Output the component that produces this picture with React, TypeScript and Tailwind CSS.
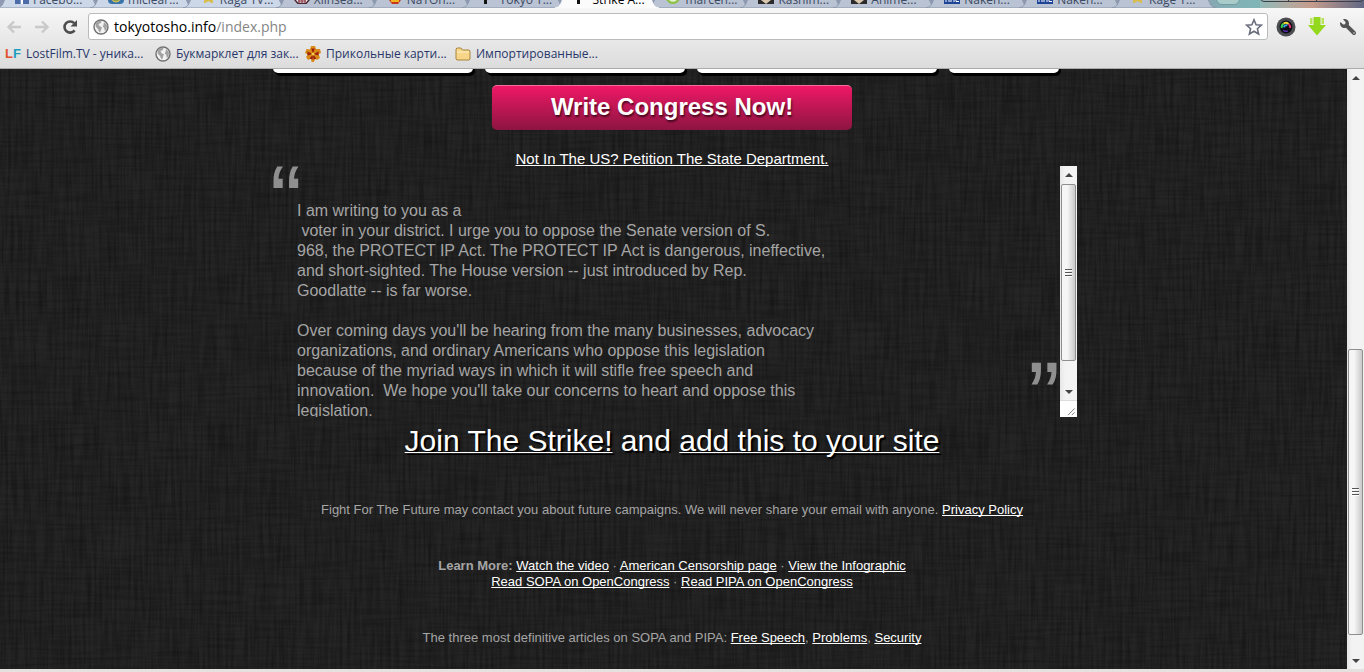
import type { ReactNode } from "react";
import { FaFacebookF, FaStar, FaWrench } from "react-icons/fa";

type TabIcon = "facebook" | "earth" | "star" | "face" | "fire" | "mark" | "green" | "avatar" | "mal";

const tabs: { id: number; title: string; icon: TabIcon; active?: boolean }[] = [
  { id: 1, title: "Facebo...", icon: "facebook" },
  { id: 2, title: "miclear...", icon: "earth" },
  { id: 3, title: "Raga TV...", icon: "star" },
  { id: 4, title: "Xiinsea...", icon: "face" },
  { id: 5, title: "NaTOn...", icon: "fire" },
  { id: 6, title: "Tokyo T...", icon: "mark" },
  { id: 7, title: "Strike A...", icon: "mark", active: true },
  { id: 8, title: "marcen...", icon: "green" },
  { id: 9, title: "Kashim...", icon: "avatar" },
  { id: 10, title: "Anime...", icon: "avatar" },
  { id: 11, title: "Naken...", icon: "mal" },
  { id: 12, title: "Naken...", icon: "mal" },
  { id: 13, title: "Kage T...", icon: "star" },
];

const letter = `I am writing to you as a
 voter in your district. I urge you to oppose the Senate version of S.
968, the PROTECT IP Act. The PROTECT IP Act is dangerous, ineffective,
and short-sighted. The House version -- just introduced by Rep.
Goodlatte -- is far worse.

Over coming days you'll be hearing from the many businesses, advocacy
organizations, and ordinary Americans who oppose this legislation
because of the myriad ways in which it will stifle free speech and
innovation.  We hope you'll take our concerns to heart and oppose this
legislation.`;

const Globe = () => (
  <svg width="16" height="16" viewBox="0 0 16 16" className="shrink-0">
    <circle cx="8" cy="8" r="7" fill="#f2f2f2" stroke="#707070" strokeWidth="1.4" />
    <path d="M3 3.5C5 1.8 7.4 1.5 8.6 2.2L7.6 4.2L5.4 5L6.6 7.2L9 8.2L8.2 10.4L7 13.8C5.4 12 5.6 10.4 4.6 9.4C3 8.4 2 7 3 3.5Z" fill="#a3a3a3" />
    <path d="M11 3L14 6L13.6 10.4L11.8 12L11.2 9L9.8 7.4L10.6 5.4Z" fill="#a3a3a3" />
  </svg>
);

const TabFavicon = ({ icon }: { icon: TabIcon }) => {
  if (icon === "facebook") {
    return (
      <span className="mb-1 flex h-[14px] w-[14px] shrink-0 items-end justify-center bg-[#4c6ba9] text-white">
        <FaFacebookF size={12} />
      </span>
    );
  }
  if (icon === "star") return <FaStar size={15} className="mb-1 shrink-0 text-[#d9bd4a]" />;
  return (
    <svg width="16" height="16" viewBox="0 0 16 16" className="mb-1 shrink-0">
      {icon === "earth" && (
        <>
          <rect width="16" height="16" rx="4" fill="#3b74a8" />
          <circle cx="8" cy="10" r="4" fill="#8a9a4a" stroke="#e0c860" />
        </>
      )}
      {icon === "face" && (
        <>
          <path d="M1 2H15V12L12 15.5H4L1 12Z" fill="#eee" stroke="#4a2733" strokeWidth="1.5" />
          <path d="M4 13H12M5 11V15M8 11V15M11 11V15" stroke="#8b2c3c" />
        </>
      )}
      {icon === "fire" && (
        <>
          <path d="M1 3H15L14 12L11 16H5L2 12Z" fill="#c63a1b" />
          <path d="M4 11H12V14H4Z" fill="#f3b51f" />
        </>
      )}
      {icon === "mark" && <path d="M4 0H7V16H4ZM7 8H10V12H7Z" fill="#111" />}
      {icon === "green" && <circle cx="8" cy="9" r="6" fill="#e4f3cf" stroke="#8fc04e" strokeWidth="2.4" />}
      {icon === "avatar" && (
        <>
          <rect width="16" height="16" fill="#2c2a2b" />
          <path d="M3 3H13V12L8 16L3 12Z" fill="#d9c7b0" />
        </>
      )}
      {icon === "mal" && (
        <>
          <rect width="16" height="16" fill="#1f4596" />
          <path d="M2 14V10H5V14M7 14V10H10V14M12 10V13.5H15" fill="none" stroke="#fff" />
        </>
      )}
    </svg>
  );
};

const TabStrip = () => (
  <nav
    aria-label="Tabs"
    className="flex h-2 items-end overflow-hidden bg-linear-to-r from-[#8e9bb2] from-85% via-[#7fb5b6] via-92% to-[#8a93a8] font-['Open_Sans','Noto_Sans',sans-serif]"
  >
    {tabs.map((tab) => (
      <button
        key={tab.id}
        className={`relative flex h-4 w-[93px] shrink items-end pl-[15px] text-left text-xs leading-4 whitespace-nowrap ${tab.active ? "z-10 text-black" : "text-[#3d4a63]"}`}
      >
        {/* slanted tab body */}
        <svg className="absolute inset-0 h-full w-full overflow-visible" viewBox="0 0 93 16" preserveAspectRatio="none">
          <path
            d="M-3 16C1 15 2 14 4 9L8 -2H90L94 9C96 14 97 15 101 16Z"
            fill={tab.active ? "#fbfbfb" : tab.id < 4 ? "#ccd7e8" : "#b9c3d3"}
            stroke={tab.active ? "#fbfbfb" : "#8995aa"}
          />
        </svg>
        <span className="relative flex items-end gap-1">
          <TabFavicon icon={tab.icon} />
          {tab.title}
        </span>
      </button>
    ))}
    <button aria-label="New tab" className="mb-[3px] ml-2 h-4 w-6 shrink-0 rounded-md border border-[#6f9c9d] bg-[#a9cccb]" />
    <div className="ml-5 flex flex-1 justify-end bg-linear-to-r from-[#8fb9b8] via-[#c69c8c] to-[#5f6783]">
      <div className="mb-[6px] flex h-4 w-[104px] rounded-b border border-[#3d3f4a]">
        <button aria-label="Minimize" className="w-7 border-r border-[#3d3f4a]" />
        <button aria-label="Maximize" className="w-7 border-r border-[#3d3f4a]" />
        <button aria-label="Close" className="flex-1" />
      </div>
    </div>
  </nav>
);

const Arrow = ({ flip }: { flip?: boolean }) => (
  <svg width="16" height="14" viewBox="0 0 16 14" fill="none" className={flip ? "rotate-180" : ""}>
    <path d="M8 1.5L2.5 7L8 12.5M3 7H15" stroke="#c9c9c9" strokeWidth="2.4" />
  </svg>
);

const Toolbar = () => (
  <div className="flex h-8 items-center pt-[5px] pr-2 pl-1.5">
    <button aria-label="Back" className="mr-3"><Arrow /></button>
    <button aria-label="Forward" className="mr-3"><Arrow flip /></button>
    <button aria-label="Reload" className="mr-2.5">
      <svg width="16" height="16" viewBox="0 0 16 16" fill="none">
        <path d="M12.6 11.4A5.6 5.6 0 1 1 12.2 4.2" stroke="#4d4d4d" strokeWidth="2.6" />
        <path d="M15 1V7.5H8.5Z" fill="#4d4d4d" />
      </svg>
    </button>
    <div className="flex h-[27px] flex-1 items-center rounded-[3px] border border-[#b9bcbb] bg-white px-1">
      <Globe />
      <button className="ml-[5px] flex-1 cursor-text text-left font-['Open_Sans','Noto_Sans',sans-serif] text-sm leading-5 text-black">
        tokyotosho.info<span className="text-[#858585]">/index.php</span>
      </button>
      <button aria-label="Bookmark this page">
        <svg width="18" height="18" viewBox="0 0 18 18" fill="none">
          <path d="M9 1.8L11.1 6.7L16.4 7.2L12.4 10.7L13.6 16L9 13.2L4.4 16L5.6 10.7L1.6 7.2L6.9 6.7Z" stroke="#6a6e7d" strokeWidth="1.6" />
        </svg>
      </button>
    </div>
    <button aria-label="Camera" className="ml-2">
      <svg width="20" height="20" viewBox="0 0 20 20" fill="none">
        <circle cx="10" cy="10" r="9.5" fill="#4b4d50" />
        <circle cx="10" cy="10" r="6.4" fill="#0c0c14" />
        <path d="M5.8 11A4.2 4.2 0 0 1 7.6 6.6" stroke="#35d04a" strokeWidth="2" />
        <path d="M7.6 6.6A4.2 4.2 0 0 1 12.6 6.9" stroke="#f0da37" strokeWidth="2" />
        <path d="M12.6 6.9A4.2 4.2 0 0 1 14 11" stroke="#e02c6a" strokeWidth="2" />
        <path d="M8 10.4A2.4 2.4 0 0 1 11.4 8.4" stroke="#32a7f0" strokeWidth="2" />
        <path d="M11.8 13.8A4.2 4.2 0 0 1 7.2 13.2" stroke="#5b2cb0" strokeWidth="1.4" />
      </svg>
    </button>
    <button aria-label="Downloads" className="ml-3">
      <svg width="18" height="19" viewBox="0 0 18 19">
        <path d="M2 1H4.5V7H2ZM13.5 1H16V7H13.5Z" fill="#b9e35c" />
        <path d="M5.5 0H12.5V8H18L9 18.5L0 8H5.5Z" fill="#94d81e" />
      </svg>
    </button>
    <button aria-label="Settings" className="ml-3.5 -scale-x-100 text-[#545454]"><FaWrench size={16} /></button>
  </div>
);

const Bookmark = ({ icon, children }: { icon: ReactNode; children: ReactNode }) => (
  <a href="#" className="flex w-[150px] items-center gap-[5px] text-[#28376a]">
    {icon}
    {children}
  </a>
);

const BookmarksBar = () => (
  <div className="flex h-7 items-center px-[5px] font-['Open_Sans','Noto_Sans',sans-serif] text-xs whitespace-nowrap">
    <Bookmark icon={<span className="w-4 font-['Liberation_Sans',sans-serif] text-[13px] font-bold text-[#e2502c]">L<span className="text-[#1b9dbd]">F</span></span>}>
      LostFilm.TV - уника...
    </Bookmark>
    <Bookmark icon={<Globe />}>Букмарклет для зак...</Bookmark>
    <Bookmark
      icon={
        <svg width="16" height="16" viewBox="0 0 16 16">
          <path d="M6 0H10L11 3L15 3L16 7L13.5 8L15 12L12 14L10 12.5L9 16H6.5L6 12.5L3 14L1 11L3 8.5L0 7L1.5 3L5 3.5Z" fill="#d98a18" />
          <path d="M8 8L6.2 2.4H9.8ZM8 8L13.6 5.4V9.4ZM8 8L11.4 12.8L8.4 13.6ZM8 8L4.6 12.8L7.6 13.6ZM8 8L2.4 5.4V9.4Z" fill="#9c230c" />
          <circle cx="8" cy="8" r="1.6" fill="#f5cf4a" />
        </svg>
      }
    >
      Прикольные карти...
    </Bookmark>
    <Bookmark
      icon={
        <svg width="16" height="14" viewBox="0 0 16 14">
          <path d="M1 3V2L2 1H6L7.5 3H14L15 4V12L14 13H2L1 12Z" fill="#f7d689" stroke="#a9833d" />
          <path d="M2 5H14" stroke="#fdf0c8" />
        </svg>
      }
    >
      Импортированные...
    </Bookmark>
  </div>
);

const Grip = () => (
  <svg width="7" height="8" viewBox="0 0 7 8" className="m-auto">
    <path d="M0 .5H7M0 3.5H7M0 6.5H7" stroke="#555" />
    <path d="M0 1.5H7M0 4.5H7M0 7.5H7" stroke="#fff" />
  </svg>
);

const ScrollArrow = ({ down }: { down?: boolean }) => (
  <button aria-label={down ? "Scroll down" : "Scroll up"} className="flex h-[17px] w-full shrink-0 items-center justify-center">
    <svg width="8" height="4" viewBox="0 0 8 4" className={down ? "rotate-180" : ""}>
      <path d="M4 0L8 4H0Z" fill="#444" />
    </svg>
  </button>
);

const Scrollbar = ({ before, thumb, after }: { before: string; thumb: string; after: string }) => (
  <div className="flex w-[17px] flex-1 flex-col bg-linear-to-r from-[#e6e6e6] to-[#f3f3f3] to-30%">
    <ScrollArrow />
    <div className={before} />
    <div className={`mx-px flex rounded-xs border border-[#8e8e8e] bg-linear-to-r from-[#f6f6f6] from-40% to-[#c9c9c9] ${thumb}`}>
      <Grip />
    </div>
    <div className={after} />
    <ScrollArrow down />
  </div>
);

// dark woven cloth behind the page
const Cloth = () => (
  <svg className="absolute inset-0 h-full w-full" aria-hidden="true">
    <filter id="warp" x="0" y="0" width="100%" height="100%">
      <feTurbulence type="fractalNoise" baseFrequency="0.35 0.02" numOctaves="2" seed="4" />
      <feColorMatrix values="0 0 0 0 0  0 0 0 0 0  0 0 0 0 0  0.6 0 0 0 -0.2" />
    </filter>
    <filter id="weft" x="0" y="0" width="100%" height="100%">
      <feTurbulence type="fractalNoise" baseFrequency="0.02 0.35" numOctaves="2" seed="9" />
      <feColorMatrix values="0 0 0 0 0  0 0 0 0 0  0 0 0 0 0  0.4 0 0 0 -0.15" />
    </filter>
    <rect width="100%" height="100%" filter="url(#warp)" />
    <rect width="100%" height="100%" filter="url(#weft)" />
  </svg>
);

const PageLink = ({ children }: { children: ReactNode }) => (
  <a href="#" className="text-white underline decoration-1 [text-decoration-skip-ink:none]">{children}</a>
);

const fieldClass = "h-8 rounded-[5px] bg-white px-2 text-black shadow-[2px_3px_0_#000]";

const StrikePage = () => (
  <main className="relative flex-1 bg-[#252525] pr-[3px] text-[#a5a5a5]">
    <Cloth />
    <div className="relative mx-auto flex w-full max-w-[800px] flex-col items-center">
      <div className="flex h-[7px] w-full items-end gap-3 overflow-hidden pb-[3px] pl-px">
        <input aria-label="Name" className={`w-[200px] ${fieldClass}`} />
        <input aria-label="Email" className={`w-[200px] ${fieldClass}`} />
        <input aria-label="Address" className={`w-[240px] ${fieldClass}`} />
        <input aria-label="Zip" className={`w-[110px] ${fieldClass}`} />
      </div>

      <button className="mt-[9px] h-[45px] w-[360px] rounded-[5px] border-t border-[#f4709c] bg-linear-to-b from-[#f01767] to-[#8d1440] pb-0.5 text-2xl font-bold text-white text-shadow-[1px_2px_2px_rgba(0,0,0,0.6)]">
        Write Congress Now!
      </button>
      <p className="mt-[21px] text-[15px] leading-[15px]">
        <PageLink>Not In The US? Petition The State Department.</PageLink>
      </p>

      {/* Letter */}
      <div className="relative flex h-[251px] w-full">
        <textarea
          aria-label="Letter to Congress"
          defaultValue={letter}
          wrap="off"
          className="h-full min-w-0 flex-1 resize-none overflow-hidden pt-[35px] pl-[25px] text-base leading-5 outline-none"
        />
        <div className="-mr-[5px] flex w-[17px] flex-col">
          <Scrollbar before="h-px" thumb="h-[177px]" after="flex-1" />
          <svg width="17" height="17" viewBox="0 0 17 17" className="border-t border-[#ddd] bg-white">
            <path d="M8 15L15 8M12 15L15 12" stroke="#777" />
          </svg>
        </div>
        <span className="absolute -top-3.5 -left-0.5 h-12 text-8xl leading-none text-[#8f8f8f]" aria-hidden="true">“</span>
        <span className="absolute top-[182px] right-3 h-12 text-8xl leading-none text-[#8f8f8f]" aria-hidden="true">”</span>
      </div>

      <h2 className="text-3xl leading-12 text-white text-shadow-[2px_2px_1px_#000]">
        <PageLink>Join The Strike!</PageLink> and <PageLink>add this to your site</PageLink>
      </h2>

      <div className="mt-[37px] flex flex-col gap-10 text-center text-[13px] leading-4">
        <p>
          Fight For The Future may contact you about future campaigns. We will never share your email with anyone.{" "}
          <PageLink>Privacy Policy</PageLink>
        </p>
        <p>
          <b>Learn More:</b> <PageLink>Watch the video</PageLink> · <PageLink>American Censorship page</PageLink> ·{" "}
          <PageLink>View the Infographic</PageLink>
          <br />
          <PageLink>Read SOPA on OpenCongress</PageLink> · <PageLink>Read PIPA on OpenCongress</PageLink>
        </p>
        <p>
          The three most definitive articles on SOPA and PIPA: <PageLink>Free Speech</PageLink>,{" "}
          <PageLink>Problems</PageLink>, <PageLink>Security</PageLink>
        </p>
      </div>
    </div>
  </main>
);

export default function App() {
  return (
    <div className="flex min-h-screen flex-col bg-[#e4e1e0] font-['Liberation_Sans',Arial,sans-serif]">
      <header className="border-b border-[#aaa] bg-linear-to-b from-[#fafafa] to-[#dcdcdc]">
        <TabStrip />
        <Toolbar />
        <BookmarksBar />
      </header>
      <div className="flex flex-1 pb-[3px]">
        <StrikePage />
        <div className="flex">
          <Scrollbar before="flex-1" thumb="h-[286px]" after="h-[17px]" />
        </div>
      </div>
    </div>
  );
}
